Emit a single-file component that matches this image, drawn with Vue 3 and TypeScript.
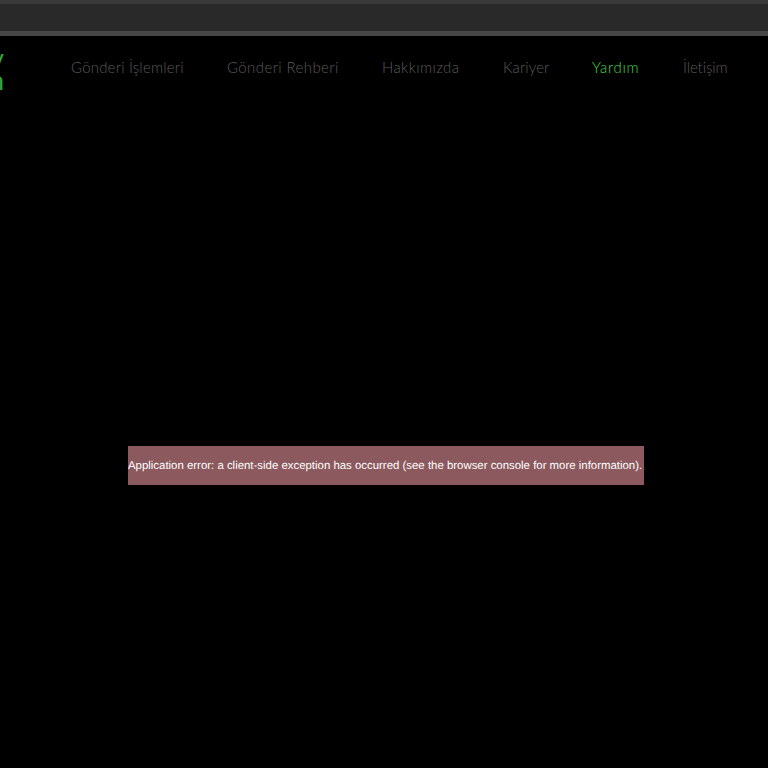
<script setup lang="ts">
const links = [
  { label: 'Gönderi İşlemleri', active: false, spacing: 0.2 },
  { label: 'Gönderi Rehberi', active: false, spacing: 0.4 },
  { label: 'Hakkımızda', active: false, spacing: 0.4 },
  { label: 'Kariyer', active: false, spacing: 0.1 },
  { label: 'Yardım', active: true, spacing: 0.7 },
  { label: 'İletişim', active: false, spacing: -0.1 },
]
</script>

<template>
  <div class="page">
    <header class="chrome"><div class="chrome-inner"></div></header>
    <nav class="nav">
      <div class="logo" aria-hidden="true">
        <span class="logo-line">y</span>
        <span class="logo-line">n</span>
      </div>
      <ul class="links">
        <li
          v-for="link in links"
          :key="link.label"
          class="link"
          :class="{ active: link.active }"
          :style="{ letterSpacing: link.spacing + 'px' }"
        >{{ link.label }}</li>
      </ul>
    </nav>
    <main class="main">
      <div class="error">Application error: a client-side exception has occurred (see the browser console for more information).</div>
    </main>
  </div>
</template>

<style scoped>
.page {
  width: 768px;
  height: 768px;
  background: #000;
  overflow: hidden;
  display: flex;
  flex-direction: column;
}
.chrome {
  height: 36px;
  box-sizing: border-box;
  background: #474747;
  padding-bottom: 5px;
  flex: none;
}
.chrome-inner {
  height: 100%;
  box-sizing: border-box;
  background: #292929;
  border-top: 4px solid #3a3a3a;
}
.nav {
  height: 64px;
  flex: none;
  display: flex;
  align-items: flex-start;
}
.logo {
  width: 4px;
  flex: none;
  overflow: hidden;
  padding-top: 11px;
  display: flex;
  flex-direction: column;
  align-items: flex-end;
  font-family: Lato, "Liberation Sans", sans-serif;
  font-size: 26px;
  font-weight: 400;
  line-height: 22px;
  color: #34a63b;
}
.logo-line {
  display: block;
}
.links {
  list-style: none;
  margin: 0;
  padding: 21px 0 0 67px;
  display: grid;
  grid-template-columns: 113px 112px 78px 46px 48px 44px;
  gap: 43px;
  font-family: Lato, "Liberation Sans", sans-serif;
  font-size: 15px;
  font-weight: 300;
  line-height: 20px;
  color: #5a5a5a;
}
.link {
  white-space: nowrap;
}
.active {
  color: #44d64c;
}
.main {
  padding: 346px 0 0 128px;
}
.error {
  width: 516px;
  height: 39px;
  background: #8c5a5e;
  color: #fff;
  font-family: "Liberation Sans", Arial, sans-serif;
  font-size: 11.42px;
  line-height: 40px;
  white-space: nowrap;
  text-rendering: geometricPrecision;
}
</style>
